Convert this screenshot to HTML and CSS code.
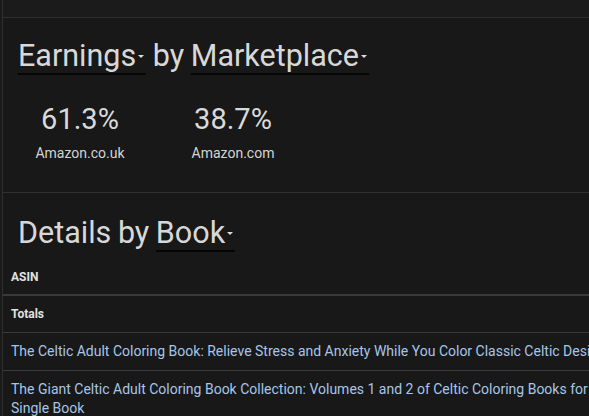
FILE: index.html
```html
<!DOCTYPE html>
<html>
<head>
<meta charset="utf-8">
<link rel="stylesheet" href="styles.css">
</head>
<body>
<div class="page">
  <div class="topstrip"></div>
  <section class="panel market">
    <h2 class="title"><span class="dd">Earnings<span class="caret"></span></span> by <span class="dd">Marketplace<span class="caret"></span></span></h2>
    <div class="stats">
      <div class="stat">
        <div class="value">61.3%</div>
        <div class="label">Amazon.co.uk</div>
      </div>
      <div class="stat">
        <div class="value">38.7%</div>
        <div class="label">Amazon.com</div>
      </div>
    </div>
  </section>
  <section class="panel details">
    <h2 class="title">Details by <span class="dd">Book<span class="caret"></span></span></h2>
    <table class="books">
      <thead>
        <tr><th>ASIN</th></tr>
      </thead>
      <tbody>
        <tr class="totals"><td>Totals</td></tr>
        <tr class="book"><td><a href="#">The Celtic Adult Coloring Book: Relieve Stress and Anxiety While You Color Classic Celtic Designs</a></td></tr>
        <tr class="book"><td><a href="#">The Giant Celtic Adult Coloring Book Collection: Volumes 1 and 2 of Celtic Coloring Books for Adults in One<br>Single Book</a></td></tr>
      </tbody>
    </table>
  </section>
</div>
</body>
</html>
```

FILE: styles.css
```css
html, body {
  margin: 0;
  padding: 0;
  background: #1a1a1a;
  overflow: hidden;
}
body {
  font-family: Roboto, "Liberation Sans", sans-serif;
  color: #d6d6d6;
  width: 589px;
  height: 416px;
}
.page {
  margin-left: 2px;
  border-left: 1px solid #303030;
  width: 900px;
  min-height: 416px;
}
.topstrip {
  height: 17px;
  background: #1b1b1b;
  border-bottom: 1px solid #2e2e2e;
}
.panel {
  background: #181818;
}
.market {
  height: 175px;
  border-bottom: 1px solid #303030;
  box-sizing: border-box;
  padding-top: 20px;
}
.title {
  margin: 0 0 0 15px;
  font-size: 30.5px;
  font-weight: 400;
  line-height: 36px;
  color: #d8d8d8;
  word-spacing: -1px;
}
.dd {
  display: inline-block;
  border-bottom: 2px solid #050505;
  line-height: 34px;
  padding-right: 10px;
  position: relative;
  word-spacing: 0;
}
.caret {
  position: absolute;
  right: 2px;
  top: 16px;
  width: 0;
  height: 0;
  border-left: 3px solid transparent;
  border-right: 3px solid transparent;
  border-top: 3px solid #dcdcdc;
}
.stats {
  display: flex;
  margin-left: 17px;
  margin-top: 28px;
  gap: 33px;
}
.stat {
  width: 120px;
  text-align: center;
}
.value {
  font-size: 29px;
  line-height: 32px;
  color: #dadada;
}
.label {
  font-size: 14px;
  line-height: 16px;
  margin-top: 10px;
  color: #d4d4d4;
}
.details {
  padding-top: 22px;
}
.books {
  border-collapse: collapse;
  width: 900px;
  margin-top: 12px;
}
.books th, .books td {
  text-align: left;
  padding: 0 8px;
}
.books th {
  font-size: 12px;
  font-weight: 700;
  line-height: 14px;
  color: #e2e2e2;
  padding-top: 6px;
  padding-bottom: 10px;
  border-bottom: 2px solid #3a3a3a;
}
.totals td {
  font-size: 12px;
  font-weight: 700;
  line-height: 14px;
  color: #e2e2e2;
  padding-top: 11px;
  padding-bottom: 11px;
  border-bottom: 1px solid #3a3a3a;
}
.book td {
  font-size: 14px;
  line-height: 19px;
  padding-top: 9px;
  padding-bottom: 9px;
  border-bottom: 1px solid #3a3a3a;
}
.book a {
  color: #a6c6e8;
  text-decoration: none;
}
```
